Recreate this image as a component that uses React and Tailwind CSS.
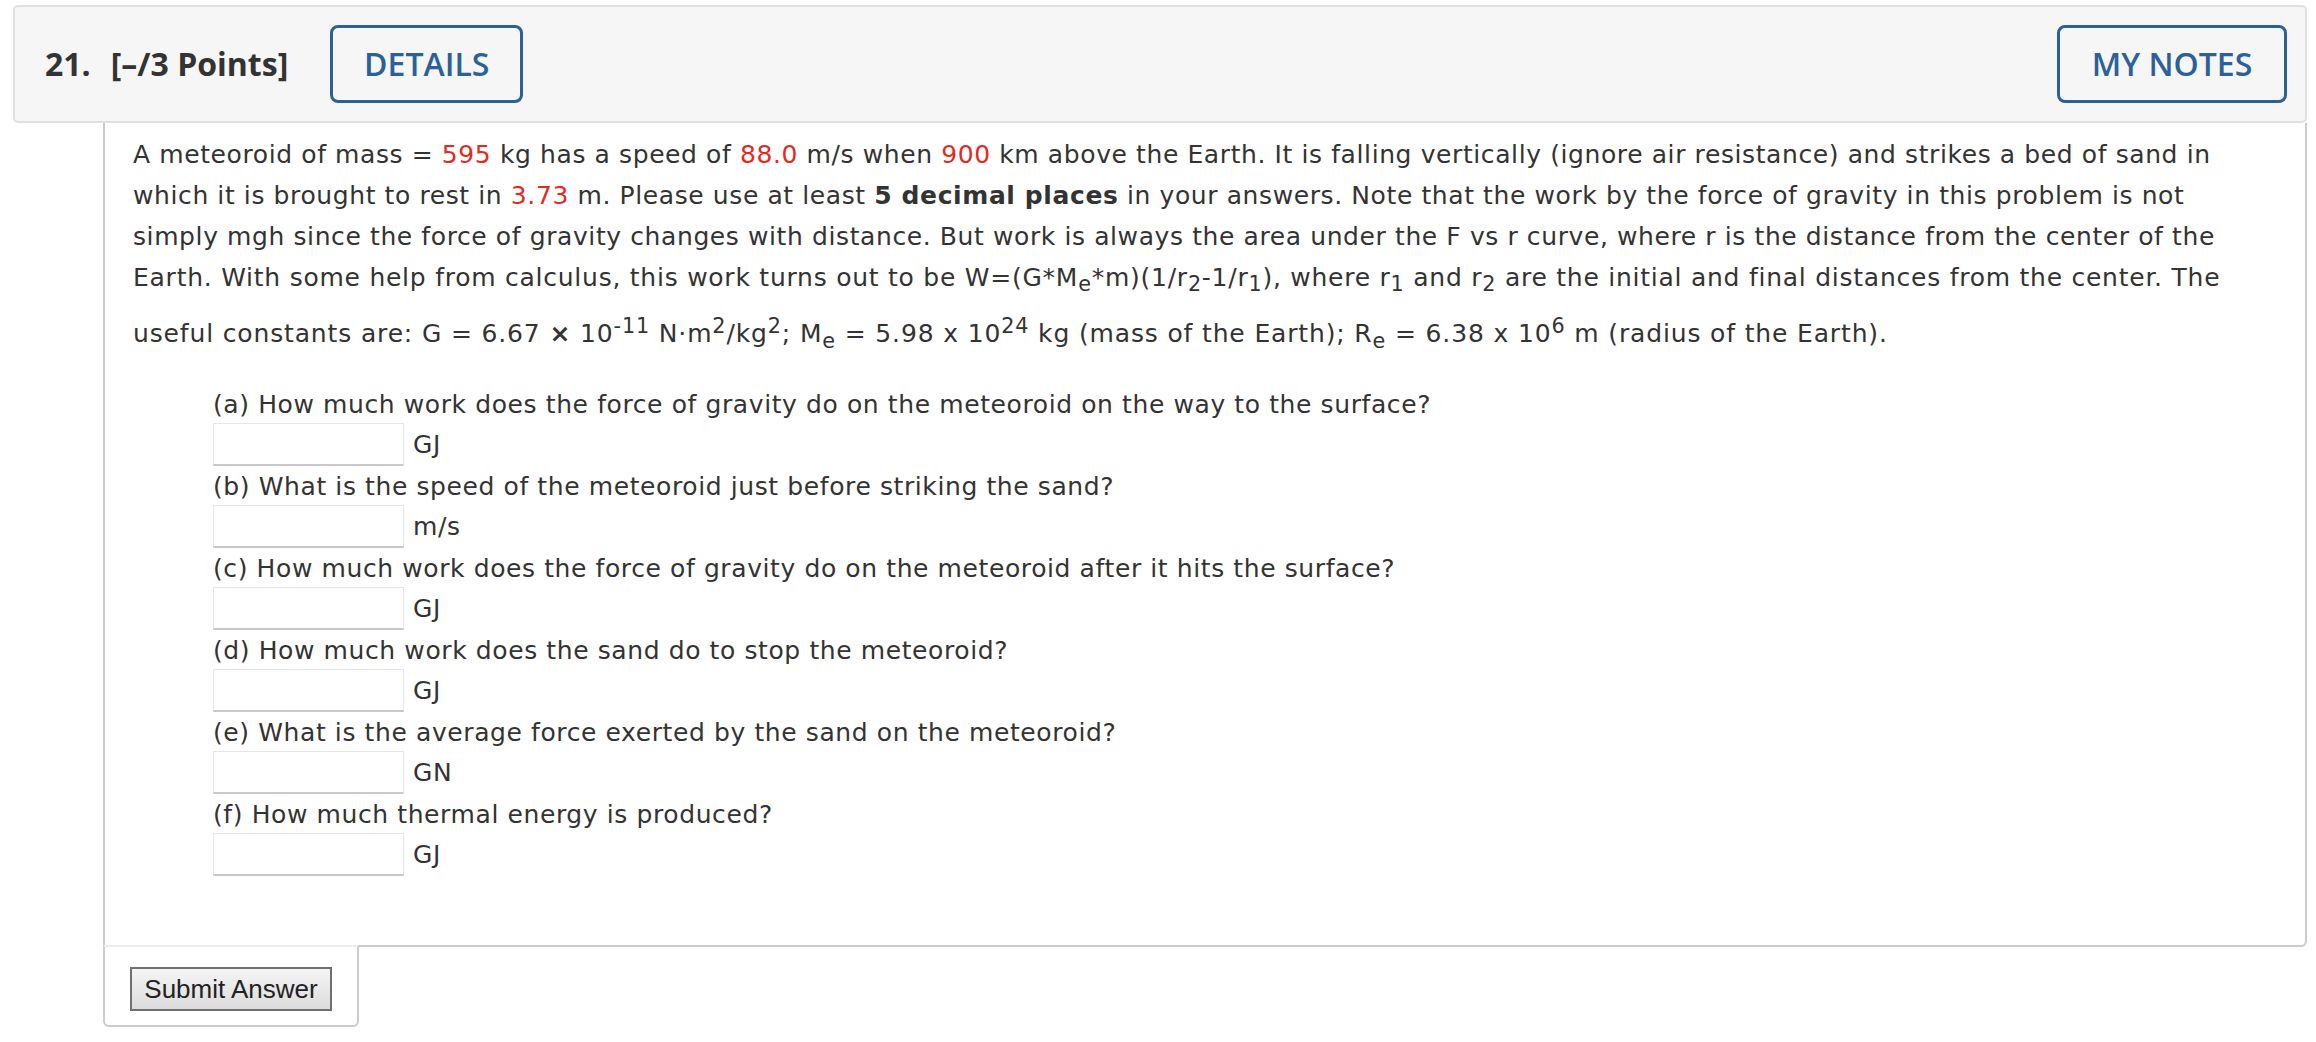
import React from 'react';

const Red = ({ children }) => <span className="text-[#e42a1f]">{children}</span>;

const Sub = ({ children }) => <sub className="text-[83%]">{children}</sub>;

const Sup = ({ children }) => (
    <sup className="align-super text-[83%] leading-[56px] static">{children}</sup>
);

const questions = [
    { label: "(a) How much work does the force of gravity do on the meteoroid on the way to the surface?", unit: "GJ" },
    { label: "(b) What is the speed of the meteoroid just before striking the sand?", unit: "m/s" },
    { label: "(c) How much work does the force of gravity do on the meteoroid after it hits the surface?", unit: "GJ" },
    { label: "(d) How much work does the sand do to stop the meteoroid?", unit: "GJ" },
    { label: "(e) What is the average force exerted by the sand on the meteoroid?", unit: "GN" },
    { label: "(f) How much thermal energy is produced?", unit: "GJ" },
];

// шапка вопроса
const QuestionHeader = () => (
    <div className="flex items-center h-[118px] bg-[#f6f6f6] border-2 border-[#e0e0e0] rounded-[5px] pl-[30px] pr-[18px] font-['Open_Sans',sans-serif] text-[#333]">
        <span className="text-[32px] font-bold">21.</span>
        <span className="text-[32px] font-bold ml-[20px]">[–/3 Points]</span>
        <button className="ml-[42px] w-[193px] h-[78px] border-[3px] border-[#2c6198] rounded-[8px] text-[#2c6198] text-[32px] font-semibold">
            DETAILS
        </button>
        <div className="flex-1" />
        <button className="w-[230px] h-[78px] border-[3px] border-[#2c6198] rounded-[8px] text-[#2c6198] text-[32px] font-semibold">
            MY NOTES
        </button>
    </div>
);

const AnswerRow = ({ label, unit }) => (
    <div>
        <div className="leading-[36px]">{label}</div>
        <div className="flex items-center h-[46px] pb-[3px]">
            <input
                type="text"
                className="w-[191px] h-[43px] bg-white border border-[#e6e6e6] border-b-2 border-b-[#c8c8c8] outline-none"
            />
            <span className="ml-[9px] leading-[36px]">{unit}</span>
        </div>
    </div>
);

export default function App() {
    return (
        <div className="min-h-screen bg-white pt-[5px] pl-[13px] pr-[9px]">
            <QuestionHeader />

            <div className="ml-[90px] font-['DejaVu_Sans',Verdana,sans-serif] text-[25px] tracking-[0.6px] text-[#333]">
                <div className="border-x-2 border-b-2 border-[#cccccc] rounded-br-[6px] pl-[28px] pr-[20px] pt-[11px] pb-[66px]">
                    <p className="leading-[41px] whitespace-nowrap">
                        A meteoroid of mass = <Red>595</Red> kg has a speed of <Red>88.0</Red> m/s when <Red>900</Red> km above the Earth. It is falling vertically (ignore air resistance) and strikes a bed of sand in<br />
                        which it is brought to rest in <Red>3.73</Red> m. Please use at least <b>5 decimal places</b> in your answers. Note that the work by the force of gravity in this problem is not<br />
                        simply mgh since the force of gravity changes with distance. But work is always the area under the F vs r curve, where r is the distance from the center of the<br />
                        <span className="tracking-[0.75px]">Earth. With some help from calculus, this work turns out to be W=(G*M<Sub>e</Sub>*m)(1/r<Sub>2</Sub>-1/r<Sub>1</Sub>), where r<Sub>1</Sub> and r<Sub>2</Sub> are the initial and final distances from the center. The</span><br />
                        <span className="tracking-[0.85px]">useful constants are: G = 6.67 <b>×</b> 10<Sup>-11</Sup> N·m<Sup>2</Sup>/kg<Sup>2</Sup>; M<Sub>e</Sub> = 5.98 x 10<Sup>24</Sup> kg (mass of the Earth); R<Sub>e</Sub> = 6.38 x 10<Sup>6</Sup> m (radius of the Earth).</span>
                    </p>

                    <div className="mt-[33px] ml-[80px]">
                        {questions.map((q) => (
                            <AnswerRow key={q.label} label={q.label} unit={q.unit} />
                        ))}
                    </div>
                </div>

                {/* кнопка отправки */}
                <div className="relative -mt-[2px] w-[256px] border-x-2 border-b-2 border-t-2 border-[#cccccc] border-t-[#eeeeee] rounded-b-[6px] pl-[25px] pt-[20px] pb-[14px]">
                    <button className="w-[202px] h-[44px] border-2 border-[#707070] bg-gradient-to-b from-[#f5f5f5] to-[#dcdcdc] font-['Liberation_Sans',Arial,sans-serif] text-[26px] tracking-normal text-[#222]">
                        Submit Answer
                    </button>
                </div>
            </div>
        </div>
    );
}
